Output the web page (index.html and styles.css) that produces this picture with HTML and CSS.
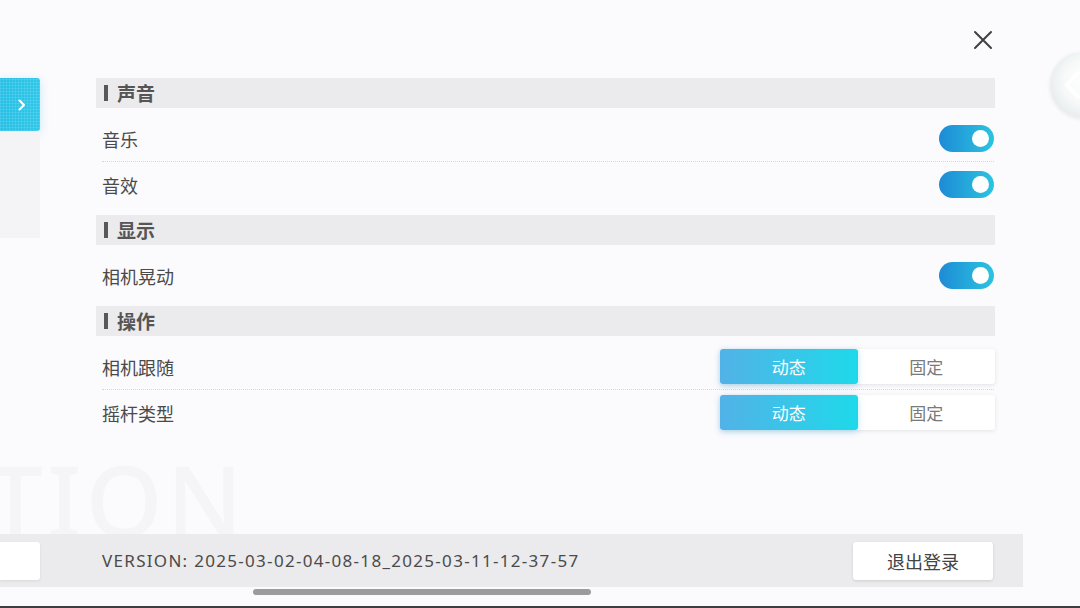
FILE: index.html
```html
<!DOCTYPE html>
<html lang="zh-CN">
<head>
<meta charset="utf-8">
<title>设置</title>
<link rel="stylesheet" href="styles.css">
</head>
<body>
<div class="app">
  <div class="watermark-box"><div class="watermark">TION</div></div>
  <button class="close" aria-label="关闭">
    <svg width="20" height="20" viewBox="0 0 20 20"><path d="M2 2 L18 18 M18 2 L2 18" stroke="#3f3f3f" stroke-width="2" fill="none" stroke-linecap="round"/></svg>
  </button>
  <div class="orb">
    <svg width="20" height="30" viewBox="0 0 20 30"><path d="M16 3 L5 15 L16 27" stroke="#ffffff" stroke-width="4" fill="none" stroke-linecap="round" stroke-linejoin="round"/></svg>
  </div>

  <div class="main">
    <aside class="side">
      <div class="tab">
        <svg width="8" height="12" viewBox="0 0 8 12"><path d="M1.5 1.5 L6 6 L1.5 10.5" stroke="#fff" stroke-width="2" fill="none" stroke-linecap="round" stroke-linejoin="round"/></svg>
      </div>
      <div class="side-rest"></div>
    </aside>

    <section class="settings">
      <div class="group">
        <div class="group-head"><span class="bar"></span><span>声音</span></div>
        <div class="row"><span class="label">音乐</span><span class="toggle"><span class="knob"></span></span></div>
        <div class="row"><span class="label">音效</span><span class="toggle"><span class="knob"></span></span></div>
      </div>
      <div class="group">
        <div class="group-head"><span class="bar"></span><span>显示</span></div>
        <div class="row"><span class="label">相机晃动</span><span class="toggle"><span class="knob"></span></span></div>
      </div>
      <div class="group">
        <div class="group-head"><span class="bar"></span><span>操作</span></div>
        <div class="row"><span class="label">相机跟随</span>
          <span class="seg"><span class="seg-on">动态</span><span class="seg-off">固定</span></span>
        </div>
        <div class="row"><span class="label">摇杆类型</span>
          <span class="seg"><span class="seg-on">动态</span><span class="seg-off">固定</span></span>
        </div>
      </div>
    </section>
  </div>

  <footer class="footer">
    <div class="foot-stub"></div>
    <div class="version">VERSION: 2025-03-02-04-08-18_2025-03-11-12-37-57</div>
    <button class="logout">退出登录</button>
  </footer>
  <div class="scroll"><div class="thumb"></div></div>
  <div class="edge"></div>
</div>
</body>
</html>
```

FILE: styles.css
```css
html, body {
  margin: 0;
  padding: 0;
}
body {
  background: #fbfafd;
  font-family: "Noto Sans", "Noto Sans CJK SC", sans-serif;
  color: #4a4a4a;
}
.app {
  position: relative;
  width: 1080px;
  height: 608px;
  overflow: hidden;
  display: flex;
  flex-direction: column;
  background: #fbfafd;
}
.watermark-box {
  position: absolute;
  left: 0;
  top: 450px;
  width: 300px;
  height: 84px;
  overflow: hidden;
  pointer-events: none;
}
.watermark {
  margin-left: -12px;
  font-family: "Noto Sans", sans-serif;
  font-weight: 500;
  font-size: 98px;
  line-height: 1;
  letter-spacing: 4px;
  color: #f5f4f7;
  white-space: nowrap;
}
.close {
  position: absolute;
  left: 973px;
  top: 30px;
  width: 20px;
  height: 20px;
  padding: 0;
  border: 0;
  background: transparent;
  display: flex;
}
.orb {
  position: absolute;
  left: 1050px;
  top: 52px;
  width: 66px;
  height: 66px;
  border-radius: 50%;
  background: radial-gradient(circle at 55% 45%, #ffffff 0%, #f7f9f9 45%, #e4e9ea 80%, #d3dadc 100%);
  box-shadow: 0 1px 4px rgba(0,0,0,0.08);
  display: flex;
  align-items: center;
  padding-left: 12px;
  box-sizing: border-box;
}
.main {
  flex: 0 0 534px;
  box-sizing: border-box;
  padding-top: 78px;
  display: flex;
  position: relative;
}
.side {
  width: 40px;
  display: flex;
  flex-direction: column;
}
.tab {
  height: 53px;
  border-radius: 0 3px 3px 0;
  background:
    repeating-linear-gradient(0deg, rgba(255,255,255,0.10) 0 1px, transparent 1px 3px),
    repeating-linear-gradient(90deg, rgba(255,255,255,0.10) 0 1px, transparent 1px 3px),
    linear-gradient(90deg, #27c0e6, #2fc6e8);
  box-shadow: 0 2px 8px rgba(40,190,230,0.25);
  display: flex;
  align-items: center;
  justify-content: flex-end;
  padding-right: 14px;
  box-sizing: border-box;
}
.side-rest {
  height: 107px;
  background: #f4f3f6;
}
.settings {
  margin-left: 56px;
  width: 899px;
  display: flex;
  flex-direction: column;
}
.group {
  margin-bottom: 8px;
}
.group-head {
  height: 30px;
  background: #ebeaec;
  display: flex;
  align-items: center;
  gap: 9px;
  padding-left: 8px;
  margin-bottom: 8px;
  font-size: 19px;
  font-weight: 700;
  color: #555555;
}
.bar {
  width: 4px;
  height: 16px;
  background: #585858;
}
.row {
  height: 45px;
  margin: 0 1px 0 6px;
  display: flex;
  align-items: center;
  justify-content: space-between;
}
.row + .row {
  border-top: 1px dotted #d8d8dc;
}
.label {
  font-size: 18px;
  color: #4a4a4a;
}
.toggle {
  width: 55px;
  height: 27px;
  border-radius: 14px;
  background: linear-gradient(90deg, #1d8bd6, #2cc4df);
  display: flex;
  align-items: center;
  justify-content: flex-end;
  padding-right: 5px;
  box-sizing: border-box;
}
.knob {
  width: 17px;
  height: 17px;
  border-radius: 50%;
  background: #ffffff;
}
.seg {
  width: 275px;
  height: 35px;
  display: flex;
  margin-right: -1px;
  border-radius: 3px;
  background: #ffffff;
  box-shadow: 0 1px 4px rgba(0,0,0,0.10);
  font-size: 17px;
}
.seg-on, .seg-off {
  flex: 1;
  display: flex;
  align-items: center;
  justify-content: center;
  border-radius: 3px;
}
.seg-on {
  background: linear-gradient(90deg, #52b2e7, #1ed9ea);
  color: #ffffff;
  box-shadow: 0 2px 6px rgba(40,170,230,0.3);
}
.seg-off {
  color: #7a7a7a;
}
.footer {
  flex: 0 0 53px;
  width: 1023px;
  background: #ebeaec;
  display: flex;
  align-items: center;
  position: relative;
}
.foot-stub {
  width: 40px;
  height: 38px;
  background: #ffffff;
  border-radius: 0 3px 3px 0;
  box-shadow: 0 1px 3px rgba(0,0,0,0.08);
}
.version {
  margin-left: 62px;
  font-size: 17px;
  letter-spacing: 1.3px;
  color: #4a4a4a;
  flex: 1;
  white-space: nowrap;
}
.logout {
  width: 140px;
  height: 38px;
  margin-right: 30px;
  border: 0;
  border-radius: 3px;
  background: #ffffff;
  box-shadow: 0 1px 3px rgba(0,0,0,0.12);
  font-family: "Noto Sans CJK SC", sans-serif;
  font-size: 18px;
  color: #444444;
  padding: 0;
}
.scroll {
  flex: 0 0 19px;
  padding-top: 2px;
  box-sizing: border-box;
}
.thumb {
  margin-left: 253px;
  width: 338px;
  height: 6px;
  border-radius: 3px;
  background: #9b9b9d;
}
.edge {
  flex: 0 0 2px;
  background: #3e3e40;
}
```
